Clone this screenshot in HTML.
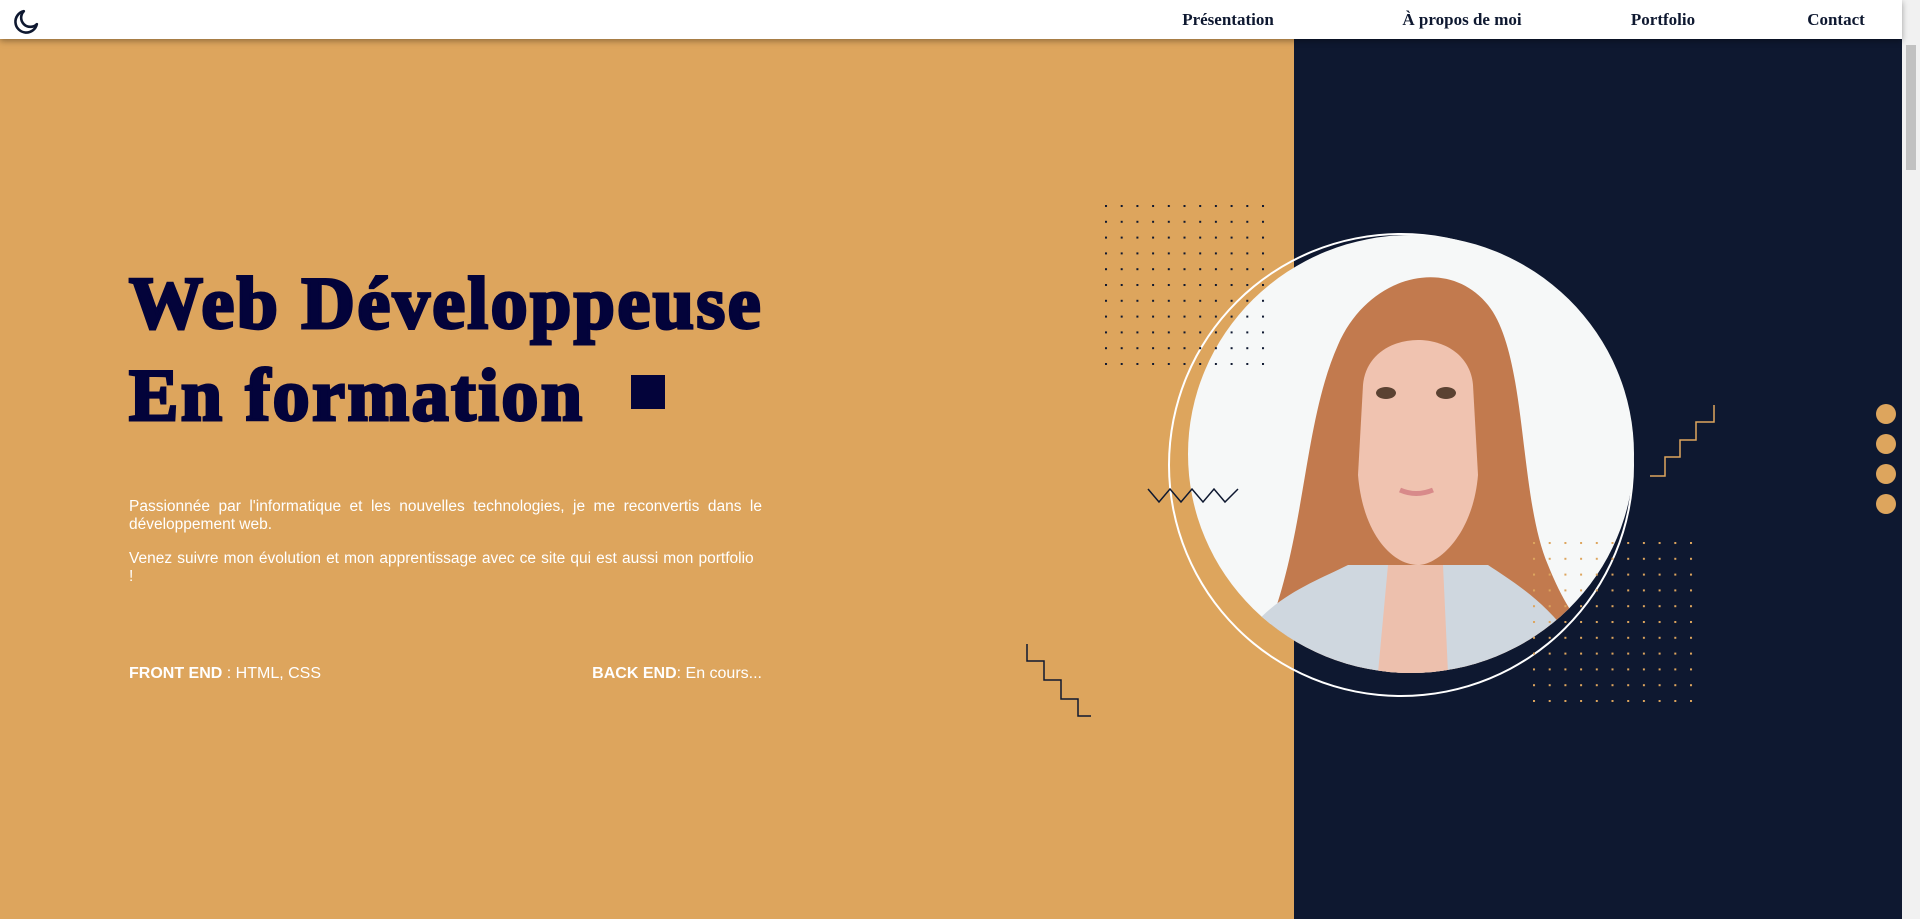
<!DOCTYPE html>
<html><head><meta charset="utf-8"><style>
*{margin:0;padding:0;box-sizing:border-box}
html,body{width:1920px;height:919px;overflow:hidden;background:#dda55d}
nav{position:absolute;left:0;top:0;width:1902px;height:39px;background:#fff;box-shadow:0 2px 6px rgba(0,0,0,.35);z-index:5}
nav a{position:absolute;top:10px;font:bold 17px "Liberation Serif",serif;color:#0e1830;text-decoration:none;transform:translateX(-50%);white-space:nowrap}
.dark{position:absolute;left:1294px;top:0;width:608px;height:919px;background:#0e1830}
.sb{position:absolute;left:1902px;top:0;width:18px;height:919px;background:#f1f1f1}
.sb div{position:absolute;left:4px;top:45px;width:10px;height:125px;background:#c1c1c1}
h1{position:absolute;left:129px;top:258px;font:900 74px/92px "Liberation Serif",serif;color:#03033a;letter-spacing:2.5px;-webkit-text-stroke:3px #03033a;white-space:nowrap}
.sq{position:absolute;left:631px;top:375px;width:34px;height:34px;background:#03033a}
.p{position:absolute;left:129px;width:633px;font:15.5px/18px "Liberation Sans",sans-serif;color:#fff;text-align:justify}
.skills{position:absolute;top:665px;font:16px "Liberation Sans",sans-serif;color:#fff}
.photo{position:absolute;left:1188px;top:235px;width:446px;height:438px;border-radius:50%;overflow:hidden;background:#f6f8f8}
.ring{position:absolute;left:1168px;top:233px;width:466px;height:464px;border:2px solid #fff;border-radius:50%}
.dot{position:absolute;left:1876px;width:20px;height:20px;border-radius:50%;background:#dda55d}
</style></head><body>
<div class="dark"></div>
<div class="sb"><div></div></div>
<nav>
<svg style="position:absolute;left:13px;top:9px" width="26" height="26" viewBox="0 0 24 24"><path d="M10 2 A10 10 0 1 0 22 14 A8 8 0 0 1 10 2 Z" fill="none" stroke="#0e1830" stroke-width="2.4" stroke-linejoin="round"/></svg>
<a style="left:1228px">Présentation</a>
<a style="left:1462px">À propos de moi</a>
<a style="left:1663px">Portfolio</a>
<a style="left:1836px">Contact</a>
</nav>
<h1>Web Développeuse<br>En formation</h1>
<div class="sq"></div>
<div class="p" style="top:498px">Passionnée par l'informatique et les nouvelles technologies, je me reconvertis dans le développement web.</div>
<div class="p" style="top:550px;word-spacing:0.8px">Venez suivre mon évolution et mon apprentissage avec ce site qui est aussi mon portfolio<br>!</div>
<div class="skills" style="left:129px"><b>FRONT END</b> : HTML, CSS</div>
<div class="skills" style="right:1158px"><b>BACK END</b>: En cours...</div>
<div class="ring"></div>
<div class="photo">
<svg width="446" height="438" viewBox="0 0 446 438">
<path d="M60 438 C120 330 110 200 150 110 C180 40 260 20 300 70 C340 120 330 260 360 330 C380 380 400 400 420 420 L420 438Z" fill="#c27a4e"/>
<path d="M40 438 C60 370 120 350 160 330 L300 330 C330 350 380 380 400 438Z" fill="#cfd7df"/>
<path d="M175 150 C180 90 280 90 285 150 L290 240 C285 300 250 330 230 330 C205 330 175 300 170 240Z" fill="#f0c3b0"/>
<path d="M200 330 L190 438 L260 438 L255 330Z" fill="#edc0ad"/>
<ellipse cx="198" cy="158" rx="10" ry="6" fill="#5b4232"/>
<ellipse cx="258" cy="158" rx="10" ry="6" fill="#5b4232"/>
<path d="M212 255 Q228 262 245 255" stroke="#d88a8a" stroke-width="5" fill="none"/>
</svg>
</div>
<svg style="position:absolute;left:0;top:0" width="1920" height="919">
<defs>
<pattern id="dd" x="1105" y="205" width="15.7" height="15.8" patternUnits="userSpaceOnUse"><rect x="0" y="0" width="2" height="2" fill="#0e1830"/></pattern>
<pattern id="od" x="1533" y="542" width="15.7" height="15.8" patternUnits="userSpaceOnUse"><rect x="0" y="0" width="2" height="2" fill="#dda55d"/></pattern>
</defs>
<rect x="1105" y="205" width="172" height="160" fill="url(#dd)"/>
<rect x="1533" y="542" width="172" height="160" fill="url(#od)"/>
<path d="M1027 644 V661 H1044 V680 H1061 V699 H1078 V716 H1091" fill="none" stroke="#0e1830" stroke-width="1.5"/>
<path d="M1650 476 H1665 V457 H1680 V440 H1696 V422 H1714 V405" fill="none" stroke="#dda55d" stroke-width="1.5"/>
<path d="M1148 489 L1159 502 L1170 489 L1181 502 L1192 489 L1203 502 L1214 489 L1225 502 L1238 489" fill="none" stroke="#0e1830" stroke-width="1.5"/>
</svg>
<div class="dot" style="top:404px"></div>
<div class="dot" style="top:434px"></div>
<div class="dot" style="top:464px"></div>
<div class="dot" style="top:494px"></div>
</body></html>
